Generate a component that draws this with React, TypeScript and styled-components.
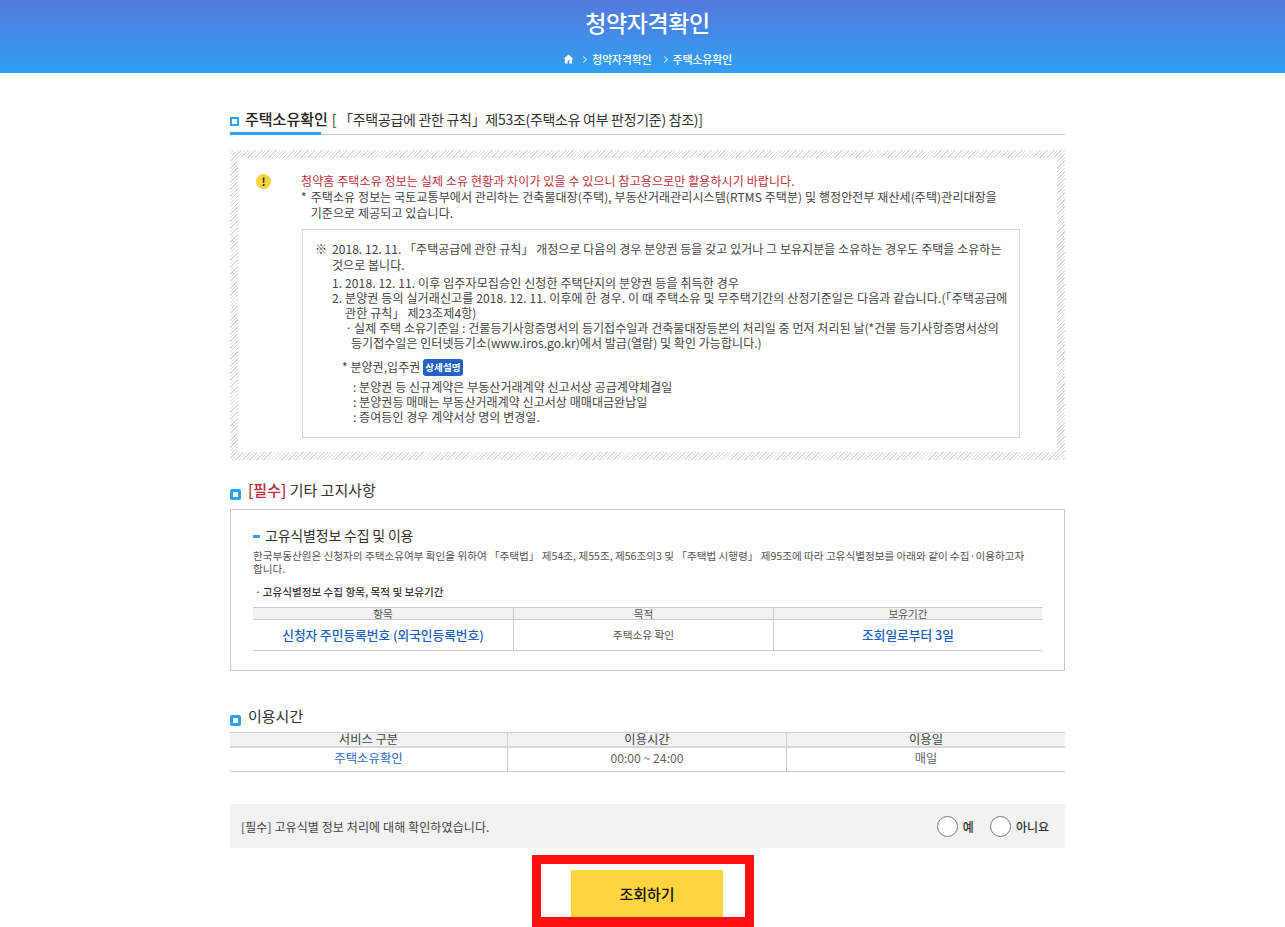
import styled, { createGlobalStyle } from 'styled-components';

const GlobalStyle = createGlobalStyle`
  * {
    box-sizing: border-box;
  }

  body {
    margin: 0;
    background: #fff;
    color: #444;
    font-family: 'Noto Sans CJK KR', 'Noto Sans', sans-serif;
    font-size: 12px;
  }
`;

const serviceHeads = ['서비스 구분', '이용시간', '이용일'];

export default function App() {
  return (
    <>
      <GlobalStyle />
      <Header>
        <PageTitle>청약자격확인</PageTitle>
        <Breadcrumb>
          <svg width="11" height="10" viewBox="0 0 24 22" fill="#fff">
            <path d="M12 1 1 11h3v10h6v-7h4v7h6V11h3z" />
          </svg>
          <Chevron />
          <span>청약자격확인</span>
          <Chevron />
          <span>주택소유확인</span>
        </Breadcrumb>
      </Header>

      <Main>
        <MainTitleRow>
          <Bullet $small />
          <MainTitle>주택소유확인</MainTitle>
          <MainTitleNote>[ 「주택공급에 관한 규칙」제53조(주택소유 여부 판정기준) 참조)]</MainTitleNote>
        </MainTitleRow>

        <HatchBox>
          <NoticeInner>
            <WarnIcon>!</WarnIcon>
            <NoticeBody>
              <RedLine>청약홈 주택소유 정보는 실제 소유 현황과 차이가 있을 수 있으니 참고용으로만 활용하시기 바랍니다.</RedLine>
              <StarLine>
                * <span>주택소유 정보는 국토교통부에서 관리하는 건축물대장(주택), 부동산거래관리시스템(RTMS 주택분) 및 행정안전부 재산세(주택)관리대장을<br />기준으로 제공되고 있습니다.</span>
              </StarLine>
              <DetailBox>
                <RefLine>
                  <RefMark>※</RefMark>
                  <span>2018. 12. 11. 「주택공급에 관한 규칙」 개정으로 다음의 경우 분양권 등을 갖고 있거나 그 보유지분을 소유하는 경우도 주택을 소유하는<br />것으로 봅니다.</span>
                </RefLine>
                <NumList>
                  <div>1. 2018. 12. 11. 이후 입주자모집승인 신청한 주택단지의 분양권 등을 취득한 경우</div>
                  <div>2. 분양권 등의 실거래신고를 2018. 12. 11. 이후에 한 경우. 이 때 주택소유 및 무주택기간의 산정기준일은 다음과 같습니다.(「주택공급에<br /><Indent>관한 규칙」 제23조제4항)</Indent></div>
                </NumList>
                <SubNote>
                  ㆍ실제 주택 소유기준일 : 건물등기사항증명서의 등기접수일과 건축물대장등본의 처리일 중 먼저 처리된 날(*건물 등기사항증명서상의<br />
                  <SubIndent>등기접수일은 인터넷등기소(www.iros.go.kr)에서 발급(열람) 및 확인 가능합니다.)</SubIndent>
                </SubNote>
                <RightsHead>
                  * 분양권,입주권 <DetailBadge>상세설명</DetailBadge>
                </RightsHead>
                <RightsList>
                  <div>: 분양권 등 신규계약은 부동산거래계약 신고서상 공급계약체결일</div>
                  <div>: 분양권등 매매는 부동산거래계약 신고서상 매매대금완납일</div>
                  <div>: 증여등인 경우 계약서상 명의 변경일.</div>
                </RightsList>
              </DetailBox>
            </NoticeBody>
          </NoticeInner>
        </HatchBox>

        <SectionTitle $top={20}>
          <Bullet />
          <span><Required>[필수]</Required> 기타 고지사항</span>
        </SectionTitle>

        <ConsentBox>
          <ConsentTitle>고유식별정보 수집 및 이용</ConsentTitle>
          <ConsentText>
            한국부동산원은 신청자의 주택소유여부 확인을 위하여 「주택법」 제54조, 제55조, 제56조의3 및 「주택법 시행령」 제95조에 따라 고유식별정보를 아래와 같이 수집·이용하고자<br />합니다.
          </ConsentText>
          <ConsentSub>ㆍ고유식별정보 수집 항목, 목적 및 보유기간</ConsentSub>
          <ConsentGrid>
            <GridHead>항목</GridHead>
            <GridHead>목적</GridHead>
            <GridHead>보유기간</GridHead>
            <GridCell $strong>신청자 주민등록번호 (외국인등록번호)</GridCell>
            <GridCell>주택소유 확인</GridCell>
            <GridCell $strong>조회일로부터 3일</GridCell>
          </ConsentGrid>
        </ConsentBox>

        <SectionTitle $top={35}>
          <Bullet />
          <span>이용시간</span>
        </SectionTitle>

        <ServiceGrid>
          {serviceHeads.map((label) => (
            <ServiceHead key={label}>{label}</ServiceHead>
          ))}
          <ServiceCell $link>주택소유확인</ServiceCell>
          <ServiceCell>00:00 ~ 24:00</ServiceCell>
          <ServiceCell>매일</ServiceCell>
        </ServiceGrid>

        <AgreeBar>
          <span>[필수] 고유식별 정보 처리에 대해 확인하였습니다.</span>
          <RadioGroup>
            <RadioLabel><RadioMark />예</RadioLabel>
            <RadioLabel><RadioMark />아니요</RadioLabel>
          </RadioGroup>
        </AgreeBar>

        <ActionRow>
          <Highlight>
            <SubmitButton>조회하기</SubmitButton>
          </Highlight>
        </ActionRow>
      </Main>
    </>
  );
}

const Header = styled.header`
  height: 73px;
  display: flex;
  flex-direction: column;
  align-items: center;
  padding-left: 10px;
  background: linear-gradient(180deg, #5479dd 0%, #2f9ff1 100%);
  color: #fff;
`;

const PageTitle = styled.h1`
  margin: 4px 0 0;
  font-size: 23px;
  font-weight: 500;
  line-height: 36px;
  letter-spacing: -0.4px;
`;

const Breadcrumb = styled.div`
  display: flex;
  align-items: center;
  margin-top: 11px;
  font-size: 11px;
  font-weight: 500;
  line-height: 16px;
  letter-spacing: -0.2px;

  svg {
    margin-right: 7px;
  }
`;

const Chevron = styled.i`
  width: 5px;
  height: 5px;
  margin-right: 6px;
  border-top: 1px solid #cfe3f8;
  border-right: 1px solid #cfe3f8;
  transform: rotate(45deg);

  span + & {
    margin-left: 10px;
  }
`;

const Main = styled.main`
  width: 835px;
  margin: 0 auto 0 230px;
`;

const Bullet = styled.i<{ $small?: boolean }>`
  flex: none;
  width: ${(p) => (p.$small ? 9 : 11)}px;
  height: ${(p) => (p.$small ? 9 : 11)}px;
  border: ${(p) => (p.$small ? 2 : 3)}px solid #2f9ff1;
  border-radius: ${(p) => (p.$small ? 0 : 2)}px;
  background: #fff;
  margin-top: ${(p) => (p.$small ? 5 : 9)}px;
`;

const MainTitleRow = styled.div`
  position: relative;
  display: flex;
  align-items: center;
  height: 30px;
  margin-top: 32px;
  padding-bottom: 2px;
  border-bottom: 1px solid #c4c4c4;

  &::after {
    content: '';
    position: absolute;
    left: 0;
    bottom: -1px;
    width: 91px;
    height: 3px;
    background: #2f9ff1;
  }
`;

const MainTitle = styled.h2`
  margin: 0 0 0 6px;
  color: #222;
  font-size: 15px;
  font-weight: 500;
  line-height: 24px;
`;

const MainTitleNote = styled.span`
  margin-left: 4px;
  color: #333;
  font-size: 14px;
  letter-spacing: -0.3px;
`;

const HatchBox = styled.section`
  height: 310px;
  margin-top: 15px;
  padding: 8px;
  background: repeating-linear-gradient(135deg, #dedede 0 1px, #fff 1px 2.5px);
`;

const NoticeInner = styled.div`
  display: flex;
  height: 100%;
  padding: 15px 0 0 17px;
  background: #fff;
`;

const WarnIcon = styled.div`
  flex: none;
  width: 15px;
  height: 15px;
  margin: 1px 0 0 1px;
  border-radius: 50%;
  background: #fdd23c;
  color: #222;
  font-size: 11px;
  font-weight: 700;
  line-height: 15px;
  text-align: center;
`;

const NoticeBody = styled.div`
  width: 719px;
  margin-left: 30px;
  line-height: 16px;
  font-size: 12px;
  letter-spacing: 0.05px;
`;

const RedLine = styled.p`
  margin: 0;
  color: #bf2f3c;
  letter-spacing: 0.1px;
`;

const StarLine = styled.p`
  display: flex;
  gap: 4px;
  margin: 0;
  white-space: nowrap;
  letter-spacing: 0.09px;
`;

const DetailBox = styled.div`
  height: 209px;
  margin: 8px 0 0 1px;
  padding: 11px 0 0 12px;
  border: 1px solid #d4d4d4;
  white-space: nowrap;
`;

const RefLine = styled.div`
  display: flex;
  gap: 5px;
`;

const RefMark = styled.span`
  width: 12px;
`;

const NumList = styled.div`
  margin: 2px 0 0 17px;
  line-height: 15px;
  letter-spacing: 0.12px;
`;

const Indent = styled.span`
  margin-left: 13px;
`;

const SubNote = styled.div`
  margin-left: 28px;
  line-height: 15px;
`;

const SubIndent = styled.span`
  margin-left: 8px;
`;

const RightsHead = styled.div`
  display: flex;
  align-items: center;
  gap: 3px;
  margin: 8px 0 0 27px;
  line-height: 18px;
`;

const DetailBadge = styled.span`
  padding: 0 2px;
  border-radius: 3px;
  background: #2160c4;
  color: #fff;
  font-size: 9.5px;
  font-weight: 700;
  line-height: 17px;
`;

const RightsList = styled.div`
  margin: 3px 0 0 38px;
  line-height: 15px;
`;

const SectionTitle = styled.h3<{ $top: number }>`
  display: flex;
  align-items: center;
  gap: 7px;
  height: 20px;
  margin: ${(p) => p.$top}px 0 0;
  color: #333;
  font-size: 15px;
  font-weight: 400;
  line-height: 20px;
`;

const Required = styled.b`
  color: #b62c37;
  font-weight: 500;
`;

const ConsentBox = styled.section`
  height: 162px;
  margin-top: 9px;
  padding: 15px 22px 0;
  border: 1px solid #c8c8c8;
`;

const ConsentTitle = styled.h4`
  position: relative;
  margin: 0;
  padding-left: 12px;
  color: #333;
  font-size: 14px;
  font-weight: 400;
  line-height: 20px;
  letter-spacing: -0.2px;

  &::before {
    content: '';
    position: absolute;
    left: 0;
    top: 10px;
    width: 7px;
    height: 3px;
    background: #2f9ff1;
  }
`;

const ConsentText = styled.p`
  margin: 4px 0 0;
  color: #555;
  font-size: 10.6px;
  line-height: 13px;
  white-space: nowrap;
`;

const ConsentSub = styled.p`
  margin: 9px 0 0;
  color: #333;
  font-size: 10.6px;
  font-weight: 500;
  line-height: 16px;
`;

const ConsentGrid = styled.div`
  display: grid;
  grid-template-columns: 260px 260px 1fr;
  margin-top: 7px;
  border-bottom: 1px solid #ccc;
`;

const GridHead = styled.div`
  height: 13px;
  border-top: 1px solid #c8c8c8;
  border-bottom: 1px solid #c8c8c8;
  background: #f2f2f2;
  color: #555;
  font-size: 10.6px;
  line-height: 11px;
  text-align: center;

  & + & {
    border-left: 1px solid #c8c8c8;
  }
`;

const GridCell = styled.div<{ $strong?: boolean }>`
  height: 30px;
  color: ${(p) => (p.$strong ? '#2160c0' : '#555')};
  font-size: ${(p) => (p.$strong ? 12.7 : 10.7)}px;
  font-weight: ${(p) => (p.$strong ? 500 : 400)};
  line-height: 29px;
  text-align: center;

  & + & {
    border-left: 1px solid #c8c8c8;
  }
`;

const ServiceGrid = styled.div`
  display: grid;
  grid-template-columns: 277px 279px 1fr;
  margin-top: 6px;
  border-bottom: 1px solid #ccc;
`;

const ServiceHead = styled.div`
  height: 16px;
  border-top: 1px solid #d0d0d0;
  border-bottom: 2px solid #d8d8d8;
  border-left: 1px solid #d0d0d0;
  background: #f2f2f2;
  color: #444;
  font-size: 12.3px;
  line-height: 13px;
  text-align: center;

  &:first-child {
    border-left: 0;
  }
`;

const ServiceCell = styled.div<{ $link?: boolean }>`
  height: 23px;
  color: ${(p) => (p.$link ? '#2e68c4' : '#666')};
  font-size: ${(p) => (p.$link ? 12.4 : 12.2)}px;
  line-height: 21px;
  text-align: center;

  & + & {
    border-left: 1px solid #c8c8c8;
  }
`;

const AgreeBar = styled.div`
  display: flex;
  align-items: center;
  justify-content: space-between;
  height: 44px;
  margin-top: 32px;
  padding: 0 16px 0 11px;
  background: #f2f2f2;
  color: #444;
  font-size: 12px;
  letter-spacing: 0.1px;
`;

const RadioGroup = styled.div`
  display: flex;
  gap: 16px;
`;

const RadioLabel = styled.label`
  display: flex;
  align-items: center;
  gap: 5px;
  color: #333;
  font-size: 12px;
  font-weight: 500;
  letter-spacing: 0;
`;

const RadioMark = styled.i`
  width: 21px;
  height: 21px;
  border: 1px solid #777;
  border-radius: 50%;
  background: #fff;
`;

const ActionRow = styled.div`
  display: flex;
  justify-content: center;
  margin-top: 7px;
  padding-right: 9px;
`;

const Highlight = styled.div`
  display: flex;
  width: 222px;
  height: 72px;
  padding: 6px 0 0 30px;
  border: 9px solid #fe1010;
  border-bottom-width: 10px;
`;

const SubmitButton = styled.button`
  width: 152px;
  height: 47px;
  border: 0;
  background: #ffd43e;
  color: #111;
  font-family: inherit;
  font-size: 15px;
  font-weight: 500;
`;
